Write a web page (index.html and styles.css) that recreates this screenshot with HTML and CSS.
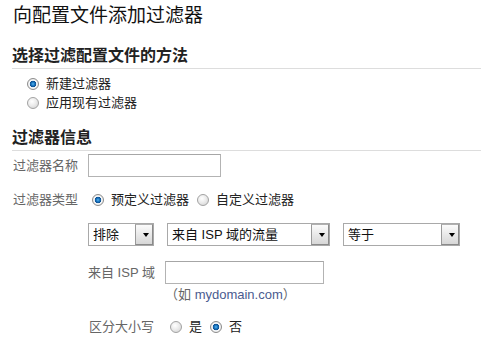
FILE: index.html
```html
<!DOCTYPE html>
<html lang="zh-CN">
<head>
<meta charset="utf-8" />
<meta name="viewport" content="width=device-width, initial-scale=1" />
<title>向配置文件添加过滤器</title>
<link rel="stylesheet" href="styles.css">
</head>
<body>
<main class="page">
<h1 class="page-title">向配置文件添加过滤器</h1>

<section class="block">
<h2 class="block-title">选择过滤配置文件的方法</h2>
<div class="method-list">
<label class="radio"><input type="radio" name="method" checked />新建过滤器</label>
<label class="radio"><input type="radio" name="method" />应用现有过滤器</label>
</div>
</section>

<section class="block">
<h2 class="block-title block-title-info">过滤器信息</h2>
<div class="field-grid">
<label class="field-label field-label-input" for="filterName">过滤器名称</label>
<input class="text-input name-input" type="text" id="filterName" autocomplete="off" />

<span class="field-label">过滤器类型</span>
<div class="radio-group">
<label class="radio"><input type="radio" name="filterType" checked />预定义过滤器</label>
<label class="radio"><input type="radio" name="filterType" />自定义过滤器</label>
</div>
</div>

<div class="predefined">
<div class="select-row">
<span class="select select-action">
<select aria-label="操作">
<option>排除</option>
<option>仅包括</option>
</select>
</span>
<span class="select select-source">
<select aria-label="来源">
<option>来自 ISP 域的流量</option>
<option>来自 IP 地址的流量</option>
</select>
</span>
<span class="select select-match">
<select aria-label="匹配">
<option>等于</option>
<option>开头为</option>
</select>
</span>
</div>

<div class="sub-grid">
<label class="field-label field-label-input" for="ispDomain">来自 ISP 域</label>
<div class="field-stack">
<input class="text-input isp-input" type="text" id="ispDomain" autocomplete="off" />
<div class="hint">（如 <span class="hint-sample">mydomain.com</span>）</div>
</div>

<span class="field-label">区分大小写</span>
<div class="radio-group radio-group-case">
<label class="radio"><input type="radio" name="caseSensitive" />是</label>
<label class="radio"><input type="radio" name="caseSensitive" checked />否</label>
</div>
</div>
</div>
</section>
</main>
</body>
</html>
```

FILE: styles.css
```css
:root {
--color-text: #222222;
--color-label: #666666;
--color-rule: #dddddd;
--color-border: #b3b3b3;
--color-link: #4a5b8f;
}
* {
box-sizing: border-box;
}
body {
margin: 0;
font-family: "Liberation Sans", "Noto Sans CJK SC", sans-serif;
font-size: 13px;
color: var(--color-text);
background: #ffffff;
}
.page {
padding-left: 13px;
}
.page-title {
margin: 4px 0 0;
font-size: 19px;
line-height: 24px;
font-weight: normal;
color: #111111;
}
.block-title {
margin: 18px 0 0 -1px;
padding-bottom: 2px;
font-size: 16px;
line-height: 20px;
font-weight: bold;
border-bottom: 1px solid var(--color-rule);
}
.block-title-info {
margin-top: 16px;
}

/* radios */
.radio {
display: inline-flex;
align-items: center;
gap: 7px;
line-height: 17px;
}
.radio input {
-webkit-appearance: none;
appearance: none;
width: 12px;
height: 12px;
margin: 0;
border: 1px solid #a2a2a2;
border-radius: 50%;
background: radial-gradient(circle at 40% 35%, #ffffff 0, #ececec 45%, #cfcfcf 100%);
}
.radio input:checked {
border-color: #8c8c8c;
background: radial-gradient(circle at 50% 50%, #5cb6ec 0, #1c79c4 1.6px, #0d4f90 3px, #ffffff 3.6px, #f4f4f4 4.2px, #d2d2d2 100%);
}
.method-list {
display: flex;
flex-direction: column;
align-items: flex-start;
margin: 5px 0 0 14px;
}
.method-list .radio {
line-height: 19px;
}

/* fields */
.field-label {
color: var(--color-label);
line-height: 17px;
white-space: nowrap;
}
.field-label-input {
line-height: 23px;
}
.field-grid {
display: grid;
grid-template-columns: 75px auto;
justify-content: start;
align-items: start;
row-gap: 14px;
margin-top: 3px;
}
.text-input {
height: 23px;
margin: 0;
padding: 0 4px;
font: inherit;
border: 1px solid var(--color-border);
border-top-color: #a6a6a6;
border-radius: 0;
background: #ffffff;
}
.name-input {
width: 133px;
}
.isp-input {
width: 159px;
}
.radio-group {
display: flex;
gap: 8px;
padding-left: 4px;
}
.radio-group-case {
padding-left: 5px;
}

/* predefined filter */
.predefined {
display: flex;
flex-direction: column;
gap: 15px;
margin: 15px 0 0 75px;
}
.select-row {
display: flex;
gap: 13px;
}
.select {
position: relative;
display: block;
}
.select select {
-webkit-appearance: none;
appearance: none;
display: block;
width: 100%;
height: 23px;
margin: 0;
padding: 0 20px 0 4px;
font: inherit;
color: #111111;
border: 1px solid #a9a9a9;
border-radius: 0;
background: #ffffff;
}
.select::before {
content: "";
position: absolute;
top: 1px;
right: 1px;
bottom: 1px;
width: 16px;
border: 1px solid #8a8a8a;
border-top-color: #b0b0b0;
border-left-color: #9a9a9a;
background: linear-gradient(#fbfbfb, #d7d7d7);
pointer-events: none;
}
.select::after {
content: "";
position: absolute;
top: 10px;
right: 5px;
border-left: 3.5px solid transparent;
border-right: 3.5px solid transparent;
border-top: 4px solid #000000;
pointer-events: none;
}
.select-action {
width: 66px;
}
.select-source {
width: 163px;
}
.select-match {
width: 117px;
}
.sub-grid {
display: grid;
grid-template-columns: 66px auto;
column-gap: 11px;
row-gap: 15px;
justify-content: start;
align-items: start;
}
.sub-grid .field-label {
text-align: right;
}
.field-stack {
display: flex;
flex-direction: column;
align-items: flex-start;
gap: 3px;
}
.hint {
line-height: 16px;
color: var(--color-label);
}
.hint-sample {
color: var(--color-link);
}
```
